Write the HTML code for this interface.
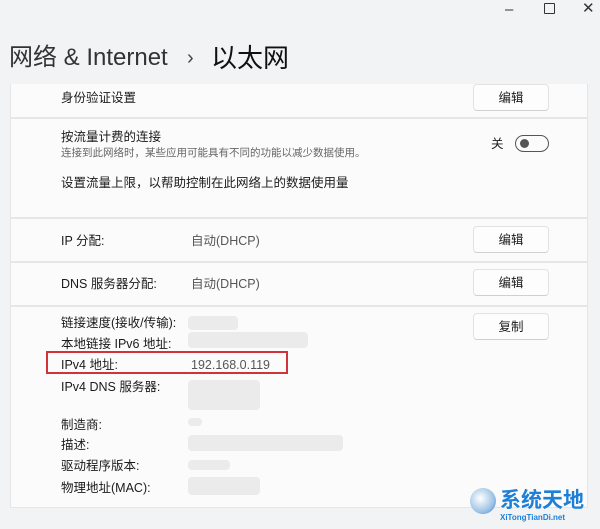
<!DOCTYPE html>
<html><head><meta charset="utf-8"><style>
body{margin:0;width:600px;height:529px;background:#f2f3f5;font-family:"Liberation Sans","Noto Sans CJK SC",sans-serif;position:relative;overflow:hidden;color:#1b1b1b}
.a{position:absolute;line-height:1}
.card{position:absolute;left:10px;width:578px;background:#fbfbfb;border:1px solid #e6e6e6;box-sizing:border-box}
.t{font-size:12.5px;position:absolute;white-space:nowrap;line-height:1}
.s{font-size:11px;color:#666}
.btn{position:absolute;left:473px;width:76px;height:27px;background:#fdfdfd;border:1px solid #e2e2e2;border-bottom-color:#d0d0d0;border-radius:4px;box-sizing:border-box;font-size:12.5px;text-align:center;line-height:26px}
.blur{position:absolute;background:#ebebeb;border-radius:4px}
.v{color:#555}
</style></head><body>
<div class="a" style="left:505px;top:2px;font-size:15px;color:#333">–</div>
<div class="a" style="left:544px;top:3px;width:9px;height:9px;border:1.3px solid #333;border-radius:1px"></div>
<div class="a" style="left:582px;top:1px;font-size:15px;color:#333">✕</div>
<div class="a" style="left:9px;top:46px;font-size:24px;color:#333">网络 &amp; Internet</div>
<div class="a" style="left:187px;top:48px;font-size:20px;color:#444">›</div>
<div class="a" style="left:211px;top:45px;font-size:26px;color:#111">以太网</div>

<div class="card" style="top:84px;height:34px;border-top:none"></div>
<div class="t" style="left:61px;top:92px">身份验证设置</div>
<div class="btn" style="top:84px">编辑</div>

<div class="card" style="top:118px;height:100px"></div>
<div class="t" style="left:61px;top:131px">按流量计费的连接</div>
<div class="t s" style="left:61px;top:148px;font-size:10.5px">连接到此网络时，某些应用可能具有不同的功能以减少数据使用。</div>
<div class="t" style="left:491px;top:138px">关</div>
<div class="a" style="left:515px;top:135px;width:34px;height:17px;border:1.3px solid #555;border-radius:10px;box-sizing:border-box"></div>
<div class="a" style="left:520px;top:139px;width:9px;height:9px;border-radius:50%;background:#555"></div>
<div class="t" style="left:61px;top:177px">设置流量上限，以帮助控制在此网络上的数据使用量</div>

<div class="card" style="top:218px;height:44px"></div>
<div class="t" style="left:61px;top:235px">IP 分配:</div>
<div class="t v" style="left:191px;top:235px">自动(DHCP)</div>
<div class="btn" style="top:226px">编辑</div>

<div class="card" style="top:262px;height:44px"></div>
<div class="t" style="left:61px;top:278px">DNS 服务器分配:</div>
<div class="t v" style="left:191px;top:278px">自动(DHCP)</div>
<div class="btn" style="top:269px">编辑</div>

<div class="card" style="top:306px;height:202px"></div>
<div class="btn" style="top:313px">复制</div>
<div class="t" style="left:61px;top:317px">链接速度(接收/传输):</div>
<div class="t" style="left:61px;top:338px">本地链接 IPv6 地址:</div>
<div class="t" style="left:61px;top:359px">IPv4 地址:</div>
<div class="t v" style="left:191px;top:359px">192.168.0.119</div>
<div class="a" style="left:46px;top:351px;width:242px;height:23px;border:2px solid #d0343a;box-sizing:border-box"></div>
<div class="t" style="left:61px;top:381px">IPv4 DNS 服务器:</div>
<div class="t" style="left:61px;top:419px">制造商:</div>
<div class="t" style="left:61px;top:439px">描述:</div>
<div class="t" style="left:61px;top:460px">驱动程序版本:</div>
<div class="t" style="left:61px;top:482px">物理地址(MAC):</div>
<div class="blur" style="left:188px;top:316px;width:50px;height:14px"></div>
<div class="blur" style="left:188px;top:332px;width:120px;height:16px"></div>
<div class="blur" style="left:188px;top:380px;width:72px;height:30px"></div>
<div class="blur" style="left:188px;top:418px;width:14px;height:8px"></div>
<div class="blur" style="left:188px;top:435px;width:155px;height:16px"></div>
<div class="blur" style="left:188px;top:460px;width:42px;height:10px"></div>
<div class="blur" style="left:188px;top:477px;width:72px;height:18px"></div>

<div class="a" style="left:470px;top:488px;width:26px;height:26px;border-radius:50%;background:radial-gradient(circle at 40% 40%,#fff,#9fc4e6 60%,#2a7fc8)"></div>
<div class="a" style="left:500px;top:490px;font-size:21px;font-weight:bold;color:#1d7fd6">系统天地</div>
<div class="a" style="left:500px;top:514px;font-size:8px;font-weight:bold;color:#1d7fd6">XiTongTianDi.net</div>
</body></html>
